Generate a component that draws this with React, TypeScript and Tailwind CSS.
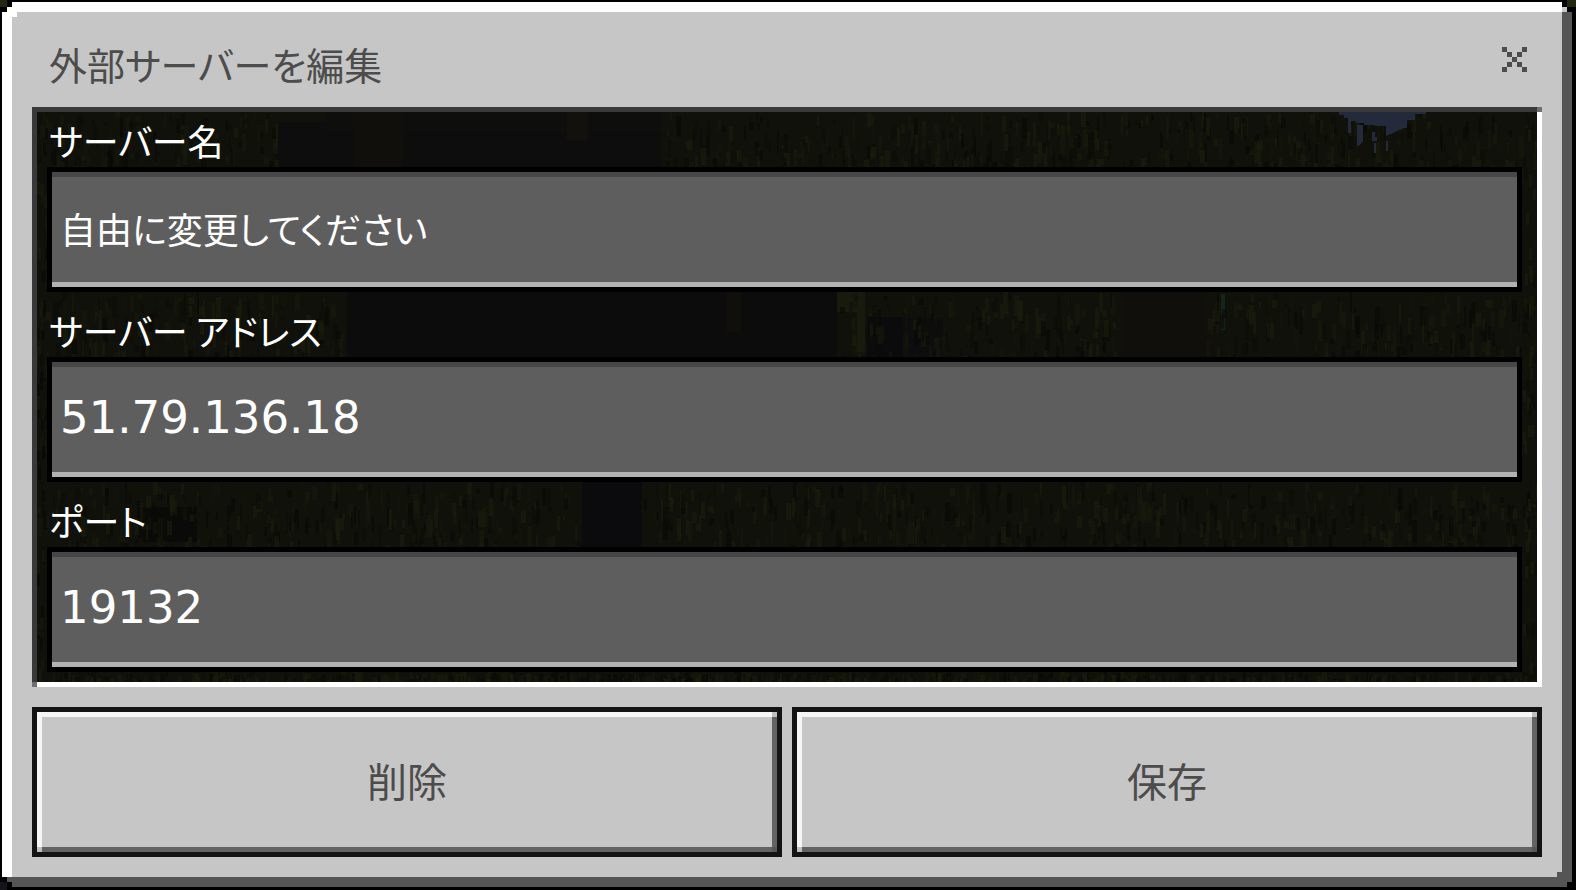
import { useState } from "react";

type Patch = { x: number; y: number; w: number; h: number; c: string };

const patches: Patch[] = [
  { x: 240, y: 10, w: 385, h: 50, c: "#0d0d0e" },
  { x: 290, y: 0, w: 335, h: 20, c: "#0e0e0d" },
  { x: 316, y: 0, w: 50, h: 55, c: "#110f0c" },
  { x: 530, y: 0, w: 20, h: 28, c: "#12110c" },
  { x: 310, y: 180, w: 490, h: 65, c: "#0c0c0d" },
  { x: 690, y: 180, w: 14, h: 40, c: "#110f0c" },
  { x: 800, y: 180, w: 20, h: 20, c: "#171a0d" },
  { x: 820, y: 180, w: 8, h: 60, c: "#171a0d" },
  { x: 830, y: 205, w: 36, h: 40, c: "#0b0b0d" },
  { x: 870, y: 206, w: 36, h: 38, c: "#0d0d0d" },
  { x: 1085, y: 180, w: 84, h: 65, c: "#110f0c" },
  { x: 1184, y: 182, w: 4, h: 36, c: "#14251c" },
  { x: 545, y: 370, w: 60, h: 65, c: "#0b0b0e" },
  { x: 100, y: 395, w: 60, h: 35, c: "#0a0a08" },
];

const leafTones = ["#090a06", "#13160a", "#171a0b", "#0c0d07", "#10130a", "#1a1e0c"];

function buildLeaves(): Patch[] {
  let seed = 7;
  const next = () => {
    seed = (seed * 16807) % 2147483647;
    return seed / 2147483647;
  };
  const bands = [
    { top: 0, h: 55, stones: [[240, 625]] },
    { top: 180, h: 65, stones: [[306, 800], [1080, 1168]] },
    { top: 370, h: 65, stones: [[540, 602]] },
    { top: 560, h: 10, stones: [] },
  ];
  const out: Patch[] = [];
  for (const band of bands) {
    for (let i = 0; i < 1100; i++) {
      const x = Math.floor(next() * 1500);
      const y = band.top + Math.floor(next() * band.h);
      const tone = leafTones[Math.floor(next() * leafTones.length)];
      const w = 2 + Math.floor(next() * 4);
      const h = 5 + Math.floor(next() * 18);
      if (!band.stones.some(([from, to]) => x > from && x < to)) out.push({ x, y, w, h, c: tone });
    }
  }
  for (let i = 0; i < 160; i++) {
    const x = i % 2 ? 1486 + Math.floor(next() * 14) : Math.floor(next() * 10);
    out.push({ x, y: Math.floor(next() * 560), w: 3, h: 12, c: leafTones[i % leafTones.length] });
  }
  return out;
}

const leaves = buildLeaves();

function Forest() {
  return (
    <svg
      aria-hidden="true"
      className="absolute inset-0 h-full w-full"
      viewBox="0 0 1500 570"
      preserveAspectRatio="none"
      shapeRendering="crispEdges"
    >
      <rect width="1500" height="570" fill="#0f110a" />
      {patches.map((p, i) => (
        <rect key={i} x={p.x} y={p.y} width={p.w} height={p.h} fill={p.c} />
      ))}
      {leaves.map((p, i) => (
        <rect key={i} x={p.x} y={p.y} width={p.w} height={p.h} fill={p.c} opacity={0.6} />
      ))}
      <path
        d="M1302 0h87v2h-11v6h-8v8h-3l-18 8v-10h-11v-1h-11v-2h-8v-2h-5v12h-3V6h-4V3h-5z"
        fill="#222a3b"
      />
      <path d="M1320 13h6v16l-5 5h-1zM1335 20h3v5h2v4h-5zM1337 31h2v10h-2zM1349 29h2v10h-2z" fill="#222a3b" />
    </svg>
  );
}

function CloseIcon() {
  const cells = [
    [0, 0], [4, 0], [1, 1], [3, 1], [2, 2], [1, 3], [3, 3], [0, 4], [4, 4],
  ];
  return (
    <svg aria-hidden="true" className="size-[25px]" viewBox="0 0 5 5" shapeRendering="crispEdges">
      {cells.map(([x, y]) => (
        <rect key={`${x}-${y}`} x={x} y={y} width="1" height="1" fill="#4c4c4c" />
      ))}
    </svg>
  );
}

type FieldProps = {
  id: string;
  label: string;
  value: string;
  numeric?: boolean;
  onChange: (v: string) => void;
};

function Field({ id, label, value, numeric, onChange }: FieldProps) {
  return (
    <div className="flex flex-col">
      <label htmlFor={id} className="h-[55px] pl-[2px] text-[36px] leading-[56px] whitespace-pre text-white">
        {label}
      </label>
      <div className="flex border-5 border-black bg-[#5e5e5e]">
        <input
          id={id}
          value={value}
          onChange={(e) => onChange(e.target.value)}
          className={
            "h-[115px] w-full min-w-0 border-t-5 border-b-5 border-t-[#474747] border-b-[#b2b2b2] px-2 pb-1 text-white outline-none " +
            (numeric ? "font-['DejaVu_Sans',sans-serif] text-[45px]" : "text-[36px]")
          }
        />
      </div>
    </div>
  );
}

function PixelButton({ children }: { children: string }) {
  return (
    <button
      type="button"
      className="relative flex h-[150px] flex-1 items-center justify-center border-5 border-[#131313] bg-[#c6c6c6] pb-1 text-[40px] text-[#4c4c4c]"
    >
      <span className="absolute inset-x-0 top-0 h-[5px] bg-[#f6f6f6]" />
      <span className="absolute inset-y-0 left-0 w-[5px] bg-[#f6f6f6]" />
      <span className="absolute inset-x-0 bottom-0 h-[5px] bg-[#636363]" />
      <span className="absolute inset-y-0 right-0 w-[5px] bg-[#636363]" />
      <span className="absolute top-0 right-0 size-[5px] bg-[#c0c0c0]" />
      <span className="absolute bottom-0 left-0 size-[5px] bg-[#c0c0c0]" />
      <span className="absolute right-0 bottom-0 size-[5px] bg-[#565656]" />
      {children}
    </button>
  );
}

export default function App() {
  const [name, setName] = useState("自由に変更してください");
  const [address, setAddress] = useState("51.79.136.18");
  const [port, setPort] = useState("19132");

  return (
    <main className="min-h-screen bg-black pt-[2px] pr-[4px] pb-[3px] pl-[2px] font-['Noto_Sans_CJK_JP',sans-serif] font-normal [font-feature-settings:'palt']">
      <div className="relative flex min-h-[calc(100vh-5px)] flex-col border-10 border-t-white border-r-[#555555] border-b-[#555555] border-l-white bg-[#c6c6c6] px-5 pb-5">
        <span className="absolute -top-[12px] -left-[12px] size-[7px] bg-[#20280f]" />
        <span className="absolute -top-[10px] -left-[5px] size-[5px] bg-black" />
        <span className="absolute -top-[5px] -left-[10px] size-[5px] bg-black" />
        <span className="absolute top-0 left-0 size-[5px] bg-white" />
        <span className="absolute right-0 bottom-0 size-[5px] bg-[#555555]" />
        <span className="absolute -top-[10px] -right-[10px] size-[10px] bg-black" />
        <span className="absolute -top-[12px] -right-[14px] h-[7px] w-[9px] bg-[#20280f]" />
        <span className="absolute -top-[5px] -right-[5px] size-[5px] bg-[#c6c6c6]" />
        <span className="absolute -bottom-[10px] -left-[10px] size-[10px] bg-black" />
        <span className="absolute -bottom-[5px] -left-[5px] size-[5px] bg-[#555555]" />
        <span className="absolute -bottom-[13px] -left-[12px] h-[8px] w-[7px] bg-[#14141a]" />
        <span className="absolute -right-[10px] -bottom-[10px] size-[5px] bg-black" />

        <header className="flex h-[95px] items-center justify-between px-[15px]">
          <h1 className="pt-2 pl-[2px] text-[38px] leading-[60px] text-[#4c4c4c]">外部サーバーを編集</h1>
          <button type="button" aria-label="閉じる" className="flex">
            <CloseIcon />
          </button>
        </header>

        <section className="relative flex-1 border-5 border-t-[#393939] border-r-white border-b-white border-l-[#393939]">
          <Forest />
          <div className="relative flex flex-col gap-[10px] pr-[15px] pb-[10px] pl-[10px]">
            <Field id="name" label="サーバー名" value={name} onChange={setName} />
            <Field id="address" label="サーバー アドレス" value={address} numeric onChange={setAddress} />
            <Field id="port" label="ポート" value={port} numeric onChange={setPort} />
          </div>
          <span className="absolute -top-[5px] -right-[5px] size-[5px] bg-[#6f6f6f]" />
          <span className="absolute -bottom-[5px] -left-[5px] size-[5px] bg-[#6f6f6f]" />
        </section>

        <footer className="mt-5 flex gap-[10px]">
          <PixelButton>削除</PixelButton>
          <PixelButton>保存</PixelButton>
        </footer>
      </div>
    </main>
  );
}
